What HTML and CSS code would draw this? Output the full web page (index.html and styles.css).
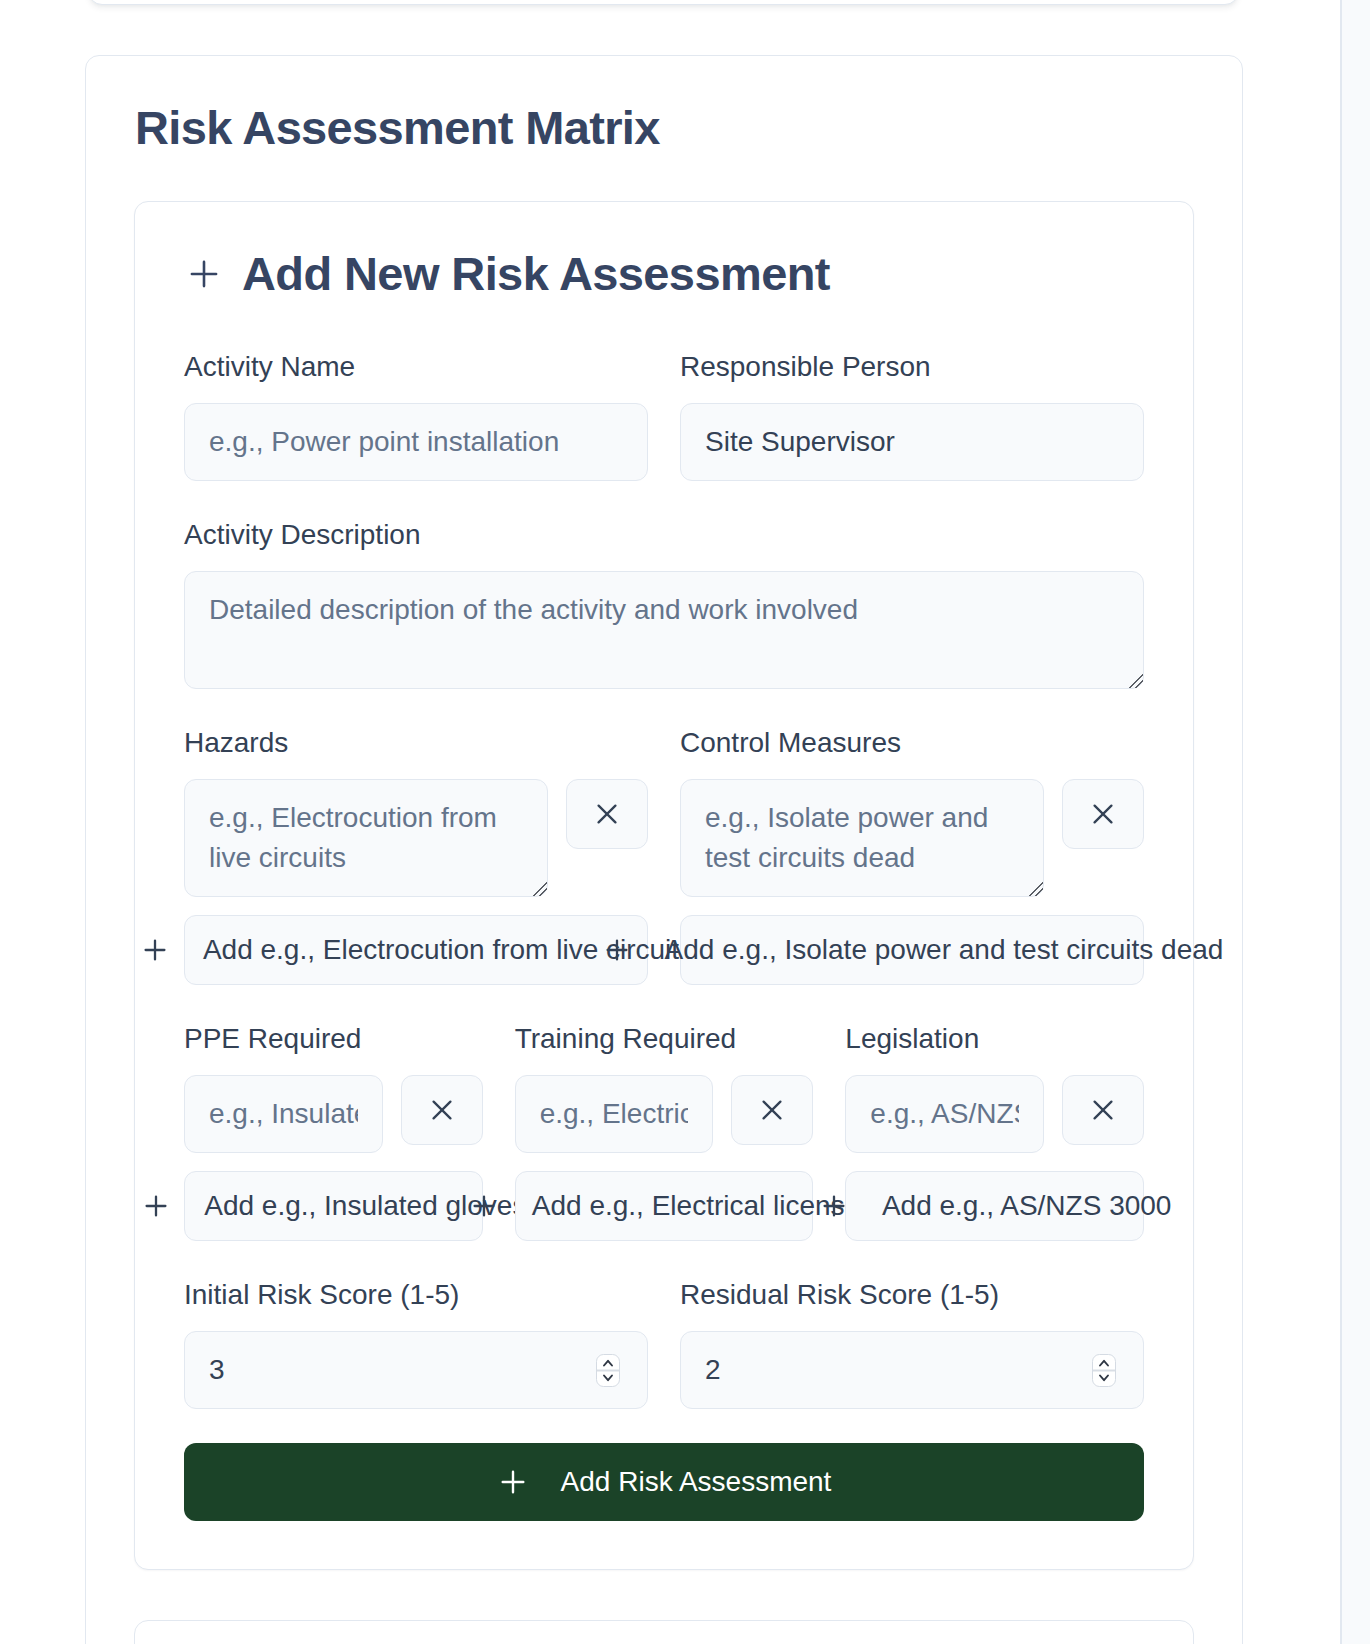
FILE: index.html
```html
<!DOCTYPE html>
<html lang="en">
<head>
<meta charset="utf-8">
<title>Risk Assessment Matrix</title>
<link rel="stylesheet" href="styles.css">
</head>
<body>
<div class="layout">
  <main class="main">
    <div class="card card-top"></div>

    <section class="card matrix">
      <h2 class="matrix-title">Risk Assessment Matrix</h2>

      <div class="card form-card">
        <h3 class="form-title">
          <svg class="icon-head" viewBox="0 0 40 40" aria-hidden="true"><path d="M20 7.9V32.1M7.9 20H32.1"/></svg>
          <span>Add New Risk Assessment</span>
        </h3>

        <div class="form-body">
          <div class="grid two">
            <div class="field">
              <label class="label">Activity Name</label>
              <input class="input" type="text" placeholder="e.g., Power point installation">
            </div>
            <div class="field">
              <label class="label">Responsible Person</label>
              <input class="input" type="text" value="Site Supervisor">
            </div>
          </div>

          <div class="field">
            <label class="label">Activity Description</label>
            <textarea class="input area" rows="2" placeholder="Detailed description of the activity and work involved"></textarea>
          </div>

          <div class="grid two">
            <div class="field">
              <label class="label">Hazards</label>
              <div class="list">
                <div class="item-row">
                  <textarea class="input area" rows="2" placeholder="e.g., Electrocution from live circuits"></textarea>
                  <button class="remove" type="button"><svg class="icon-x" viewBox="0 0 20 20"><path d="M1.6 1.6L18.4 18.4M18.4 1.6L1.6 18.4"/></svg></button>
                </div>
                <button class="add-item" type="button"><svg class="icon-add" viewBox="0 0 32 32"><path d="M16 6.6V25.4M6.6 16H25.4"/></svg><span>Add e.g., Electrocution from live circuits</span></button>
              </div>
            </div>
            <div class="field">
              <label class="label">Control Measures</label>
              <div class="list">
                <div class="item-row">
                  <textarea class="input area" rows="2" placeholder="e.g., Isolate power and test circuits dead"></textarea>
                  <button class="remove" type="button"><svg class="icon-x" viewBox="0 0 20 20"><path d="M1.6 1.6L18.4 18.4M18.4 1.6L1.6 18.4"/></svg></button>
                </div>
                <button class="add-item" type="button"><svg class="icon-add" viewBox="0 0 32 32"><path d="M16 6.6V25.4M6.6 16H25.4"/></svg><span>Add e.g., Isolate power and test circuits dead</span></button>
              </div>
            </div>
          </div>

          <div class="grid three">
            <div class="field">
              <label class="label">PPE Required</label>
              <div class="list">
                <div class="item-row">
                  <input class="input" type="text" placeholder="e.g., Insulated gloves">
                  <button class="remove" type="button"><svg class="icon-x" viewBox="0 0 20 20"><path d="M1.6 1.6L18.4 18.4M18.4 1.6L1.6 18.4"/></svg></button>
                </div>
                <button class="add-item" type="button"><svg class="icon-add" viewBox="0 0 32 32"><path d="M16 6.6V25.4M6.6 16H25.4"/></svg><span>Add e.g., Insulated gloves</span></button>
              </div>
            </div>
            <div class="field">
              <label class="label">Training Required</label>
              <div class="list">
                <div class="item-row">
                  <input class="input" type="text" placeholder="e.g., Electrical license">
                  <button class="remove" type="button"><svg class="icon-x" viewBox="0 0 20 20"><path d="M1.6 1.6L18.4 18.4M18.4 1.6L1.6 18.4"/></svg></button>
                </div>
                <button class="add-item" type="button"><svg class="icon-add" viewBox="0 0 32 32"><path d="M16 6.6V25.4M6.6 16H25.4"/></svg><span>Add e.g., Electrical license</span></button>
              </div>
            </div>
            <div class="field">
              <label class="label">Legislation</label>
              <div class="list">
                <div class="item-row">
                  <input class="input" type="text" placeholder="e.g., AS/NZS 3000">
                  <button class="remove" type="button"><svg class="icon-x" viewBox="0 0 20 20"><path d="M1.6 1.6L18.4 18.4M18.4 1.6L1.6 18.4"/></svg></button>
                </div>
                <button class="add-item" type="button"><svg class="icon-add" viewBox="0 0 32 32"><path d="M16 6.6V25.4M6.6 16H25.4"/></svg><span>Add e.g., AS/NZS 3000</span></button>
              </div>
            </div>
          </div>

          <div class="grid two">
            <div class="field">
              <label class="label">Initial Risk Score (1-5)</label>
              <div class="number">
                <input type="number" min="1" max="5" value="3">
                <svg class="spinner" viewBox="0 0 24 33" aria-hidden="true">
                  <rect class="spin-box" x="0.5" y="0.5" width="23" height="32" rx="7"/>
                  <path class="spin-sep" d="M1 16.5H23"/>
                  <path class="spin-chev" d="M8 11.5L12 6.8L16 11.5M8 21.5L12 26.2L16 21.5"/>
                </svg>
              </div>
            </div>
            <div class="field">
              <label class="label">Residual Risk Score (1-5)</label>
              <div class="number">
                <input type="number" min="1" max="5" value="2">
                <svg class="spinner" viewBox="0 0 24 33" aria-hidden="true">
                  <rect class="spin-box" x="0.5" y="0.5" width="23" height="32" rx="7"/>
                  <path class="spin-sep" d="M1 16.5H23"/>
                  <path class="spin-chev" d="M8 11.5L12 6.8L16 11.5M8 21.5L12 26.2L16 21.5"/>
                </svg>
              </div>
            </div>
          </div>

          <button class="submit" type="button"><svg class="icon-submit" viewBox="0 0 32 32"><path d="M16 5.7V26.3M5.7 16H26.3"/></svg><span>Add Risk Assessment</span></button>
        </div>
      </div>

      <div class="card next-card"></div>
    </section>
  </main>
  <aside class="side"></aside>
</div>
</body>
</html>
```

FILE: styles.css
```css
* {
  box-sizing: border-box;
}

html,
body {
  margin: 0;
  padding: 0;
  background: #ffffff;
}

body {
  font-family: "Liberation Sans", Arial, Helvetica, sans-serif;
  color: #334155;
}

.layout {
  display: flex;
  height: 1644px;
  overflow: hidden;
}

.main {
  flex: 1;
  min-width: 0;
  padding-left: 85px;
}

.side {
  flex: none;
  width: 30px;
  border-left: 2px solid #e2e8f0;
  background: #f8fafc;
}

.card {
  background: #ffffff;
  border: 1px solid #e2e8f0;
  border-radius: 14px;
}

.card-top {
  width: 1151px;
  height: 80px;
  margin-top: -75px;
  margin-left: 3px;
  box-shadow: 0 4px 6px -1px rgba(15, 23, 42, 0.07), 0 2px 4px -2px rgba(15, 23, 42, 0.05);
}

.matrix {
  width: 1158px;
  margin-top: 50px;
  padding: 48px;
  min-height: 1700px;
}

.matrix-title {
  margin: 0 0 49px;
  padding-left: 1px;
  font-size: 47px;
  line-height: 48px;
  font-weight: 700;
  letter-spacing: -0.65px;
  color: #364563;
}

.form-card {
  padding: 48px 49px;
  box-shadow: 0 1px 2px rgba(15, 23, 42, 0.04);
}

.form-title {
  display: flex;
  align-items: center;
  gap: 18px;
  margin: 0 0 49px;
  font-size: 47px;
  line-height: 48px;
  font-weight: 700;
  letter-spacing: -0.6px;
  color: #364563;
}

.icon-head {
  flex: none;
  width: 40px;
  height: 40px;
  fill: none;
  stroke: #364563;
  stroke-width: 2.6;
  stroke-linecap: round;
}

.form-body {
  display: flex;
  flex-direction: column;
  gap: 34px;
}

.grid {
  display: grid;
  column-gap: 32px;
}

.two {
  grid-template-columns: 1fr 1fr;
}

.three {
  grid-template-columns: 1fr 1fr 1fr;
}

.field {
  display: flex;
  flex-direction: column;
  min-width: 0;
}

.label {
  display: block;
  margin-bottom: 16px;
  font-size: 28px;
  line-height: 40px;
  color: #334155;
}

.input {
  display: block;
  width: 100%;
  height: 78px;
  padding: 18px 24px;
  font-family: inherit;
  font-size: 28px;
  line-height: 40px;
  color: #334155;
  background: #f8fafc;
  border: 1px solid #e2e8f0;
  border-radius: 12px;
  outline: none;
  margin: 0;
}

.input::placeholder {
  color: #64748b;
  opacity: 1;
}

.area {
  height: 118px;
  resize: vertical;
}

.area::-webkit-resizer {
  background-color: transparent;
  background-image: linear-gradient(135deg,
    transparent 0 52%,
    #5b5f66 52% 60%,
    transparent 60% 72%,
    #5b5f66 72% 80%,
    transparent 80%);
}

.list {
  display: flex;
  flex-direction: column;
  gap: 18px;
}

.item-row {
  display: flex;
  align-items: flex-start;
  gap: 18px;
}

.item-row .input {
  flex: 1;
  min-width: 0;
}

.remove {
  flex: none;
  width: 82px;
  height: 70px;
  display: flex;
  align-items: center;
  justify-content: center;
  padding: 0;
  margin: 0;
  background: #f8fafc;
  border: 1px solid #e2e8f0;
  border-radius: 12px;
}

.icon-x {
  width: 20px;
  height: 20px;
  fill: none;
  stroke: #334155;
  stroke-width: 2.3;
  stroke-linecap: round;
}

.add-item {
  display: flex;
  align-items: center;
  justify-content: center;
  gap: 32px;
  width: 100%;
  height: 70px;
  padding: 0 24px;
  margin: 0;
  font-family: inherit;
  font-size: 28px;
  line-height: 40px;
  color: #334155;
  white-space: nowrap;
  background: #f8fafc;
  border: 1px solid #e2e8f0;
  border-radius: 12px;
  overflow: visible;
}

.icon-add {
  flex: none;
  width: 32px;
  height: 32px;
  fill: none;
  stroke: #334155;
  stroke-width: 2.3;
  stroke-linecap: round;
}

.number {
  display: flex;
  align-items: center;
  height: 78px;
  padding: 0 27px 0 24px;
  background: #f8fafc;
  border: 1px solid #e2e8f0;
  border-radius: 12px;
}

.number input {
  flex: 1;
  min-width: 0;
  padding: 0;
  margin: 0;
  border: 0;
  outline: none;
  background: transparent;
  font-family: inherit;
  font-size: 28px;
  line-height: 40px;
  color: #334155;
  -moz-appearance: textfield;
  appearance: textfield;
}

.number input::-webkit-inner-spin-button,
.number input::-webkit-outer-spin-button {
  -webkit-appearance: none;
  margin: 0;
}

.spinner {
  flex: none;
  width: 24px;
  height: 33px;
}

.spin-box {
  fill: #ffffff;
  stroke: #d5dbe3;
  stroke-width: 1;
}

.spin-sep {
  stroke: #d9dee5;
  stroke-width: 2;
}

.spin-chev {
  fill: none;
  stroke: #2f3744;
  stroke-width: 1.9;
  stroke-linecap: round;
  stroke-linejoin: round;
}

.submit {
  display: flex;
  align-items: center;
  justify-content: center;
  gap: 32px;
  width: 100%;
  height: 78px;
  margin: 0;
  padding: 0 24px;
  border: 0;
  border-radius: 12px;
  background: #1b4328;
  color: #ffffff;
  font-family: inherit;
  font-size: 28px;
  line-height: 40px;
}

.icon-submit {
  flex: none;
  width: 32px;
  height: 32px;
  fill: none;
  stroke: #ffffff;
  stroke-width: 2.4;
  stroke-linecap: round;
}

.next-card {
  margin-top: 50px;
  height: 240px;
}
```
